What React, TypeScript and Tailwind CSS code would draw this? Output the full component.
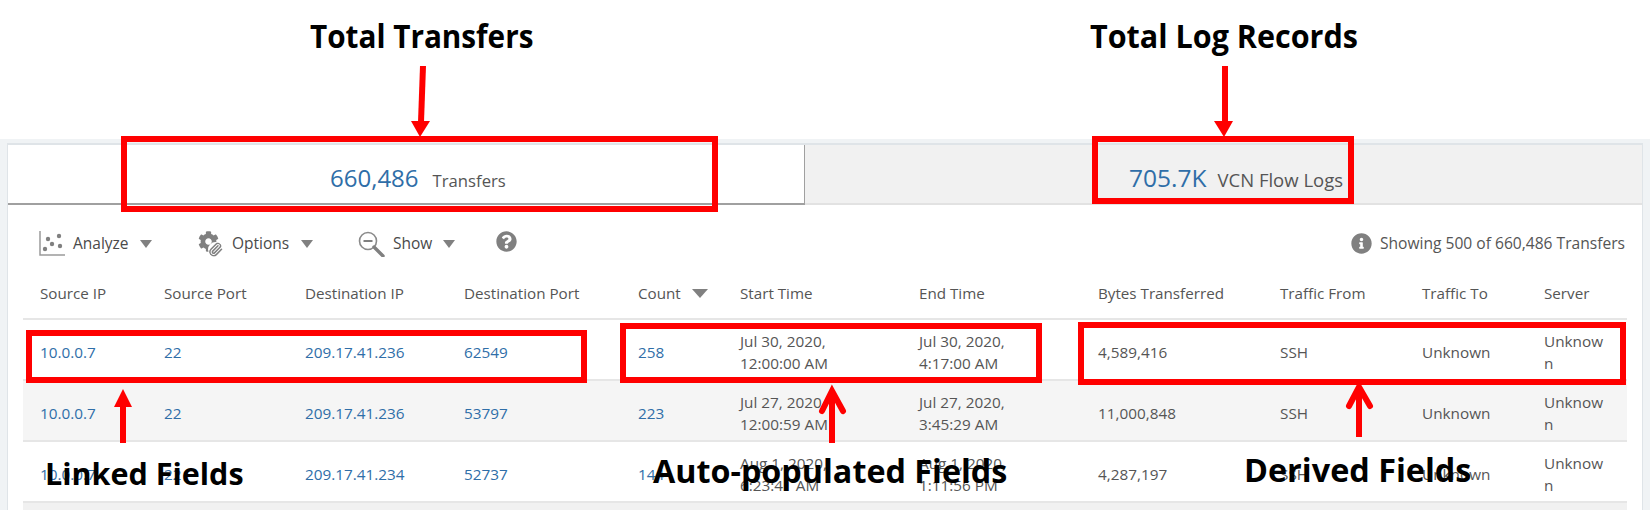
import { FaCog, FaInfoCircle, FaQuestionCircle } from 'react-icons/fa';
import { Paperclip } from 'lucide-react';

const columns = 'grid grid-cols-[124px_141px_159px_174px_102px_179px_179px_182px_142px_122px_84px]';

const headers = [
  'Source IP',
  'Source Port',
  'Destination IP',
  'Destination Port',
  'Count',
  'Start Time',
  'End Time',
  'Bytes Transferred',
  'Traffic From',
  'Traffic To',
  'Server',
];

const rows = [
  {
    ip: '10.0.0.7',
    port: '22',
    dest: '209.17.41.236',
    destPort: '62549',
    count: '258',
    start: ['Jul 30, 2020,', '12:00:00 AM'],
    end: ['Jul 30, 2020,', '4:17:00 AM'],
    bytes: '4,589,416',
    bg: 'bg-white',
  },
  {
    ip: '10.0.0.7',
    port: '22',
    dest: '209.17.41.236',
    destPort: '53797',
    count: '223',
    start: ['Jul 27, 2020,', '12:00:59 AM'],
    end: ['Jul 27, 2020,', '3:45:29 AM'],
    bytes: '11,000,848',
    bg: 'bg-[#f5f5f5]',
  },
  {
    ip: '10.0.0.7',
    port: '22',
    dest: '209.17.41.234',
    destPort: '52737',
    count: '144',
    start: ['Aug 1, 2020,', '6:23:41 AM'],
    end: ['Aug 1, 2020,', '1:11:56 PM'],
    bytes: '4,287,197',
    bg: 'bg-white',
  },
];

function Caret({ w = 12, h = 8 }: { w?: number; h?: number }) {
  return (
    <svg width={w} height={h} viewBox="0 0 12 8" preserveAspectRatio="none" className="shrink-0">
      <path d="M0 0h12L6 8z" fill="#808080" />
    </svg>
  );
}

function AnalyzeIcon() {
  return (
    <svg width="26" height="25" viewBox="0 0 26 25" className="shrink-0">
      <path d="M1 0v24h25" fill="none" stroke="#9a9a9a" strokeWidth="1.5" />
      <circle cx="9" cy="8" r="2.2" fill="#808080" />
      <circle cx="20" cy="5" r="2.2" fill="#808080" />
      <circle cx="13" cy="13" r="2.2" fill="#808080" />
      <circle cx="21" cy="15" r="2.2" fill="#808080" />
      <circle cx="6" cy="18" r="2.2" fill="#808080" />
    </svg>
  );
}

function OptionsIcon() {
  return (
    <span className="relative block w-[25px] h-[26px] shrink-0">
      <FaCog className="text-[#808080] w-[21px] h-[21px]" />
      <Paperclip
        className="absolute right-0 bottom-0 w-[15px] h-[15px] text-[#808080] bg-white rounded-full"
        strokeWidth={2.4}
      />
    </span>
  );
}

function ShowIcon() {
  return (
    <svg width="27" height="26" viewBox="0 0 27 26" className="shrink-0">
      <circle cx="10" cy="10" r="8.5" fill="none" stroke="#8a8a8a" strokeWidth="1.6" />
      <path d="M5.5 10h9" stroke="#808080" strokeWidth="2" />
      <path d="M16 16l9 9" stroke="#808080" strokeWidth="3.4" strokeLinecap="round" />
    </svg>
  );
}

function ToolButton({ icon, label, gap, width }: { icon: React.ReactNode; label: string; gap: string; width: string }) {
  return (
    <div className={`flex items-center ${width}`}>
      {icon}
      <span className={`${gap} text-[15.5px] text-[#4a4a4a]`}>{label}</span>
    </div>
  );
}

function Cell({ children, className = '' }: { children: React.ReactNode; className?: string }) {
  return <div className={`flex items-center pt-[5px] text-[15.3px] leading-[22px] ${className}`}>{children}</div>;
}

function Row({ row }: { row: (typeof rows)[number] }) {
  const link = 'text-[#2f6ea8]';
  const plain = 'text-[#555555]';
  return (
    <div className={`${columns} ${row.bg} h-[61px] pl-[17px] border-b-2 border-[#e6e6e6]`}>
      <Cell className={link}>{row.ip}</Cell>
      <Cell className={link}>{row.port}</Cell>
      <Cell className={link}>{row.dest}</Cell>
      <Cell className={link}>{row.destPort}</Cell>
      <Cell className={link}>{row.count}</Cell>
      <Cell className={plain}>
        <span>
          {row.start[0]}
          <br />
          {row.start[1]}
        </span>
      </Cell>
      <Cell className={plain}>
        <span>
          {row.end[0]}
          <br />
          {row.end[1]}
        </span>
      </Cell>
      <Cell className={plain}>{row.bytes}</Cell>
      <Cell className={plain}>SSH</Cell>
      <Cell className={plain}>Unknown</Cell>
      <Cell className={plain}>
        <span className="block w-[66px] break-all">Unknown</span>
      </Cell>
    </div>
  );
}

function Annotations() {
  const label = 'absolute font-bold text-black leading-none whitespace-nowrap';
  const box = 'absolute border-[6px] border-[#ff0000]';
  return (
    <>
      <div className={`${box} left-[121px] top-[136px] w-[597px] h-[76px]`} />
      <div className={`${box} left-[1092px] top-[136px] w-[262px] h-[68px]`} />
      <div className={`${box} left-[26px] top-[330px] w-[561px] h-[53px]`} />
      <div className={`${box} left-[620px] top-[323px] w-[422px] h-[60px]`} />
      <div className={`${box} left-[1078px] top-[322px] w-[548px] h-[63px]`} />

      <svg className="absolute left-0 top-0 pointer-events-none" width="1650" height="520" viewBox="0 0 1650 520">
        <path d="M423 66l-2 56" stroke="#ff0000" strokeWidth="6" />
        <path d="M411 121h19l-10 16z" fill="#ff0000" />
        <path d="M1225 66v56" stroke="#ff0000" strokeWidth="6" />
        <path d="M1214 121h19l-9 16z" fill="#ff0000" />
        <path d="M123 443v-40" stroke="#ff0000" strokeWidth="6" />
        <path d="M114 407h18l-9 -18z" fill="#ff0000" />
        <path d="M832 443v-52" stroke="#ff0000" strokeWidth="6" />
        <path d="M822 411l10-20 11 20" fill="none" stroke="#ff0000" strokeWidth="6" strokeLinecap="round" />
        <path d="M1359 437v-50" stroke="#ff0000" strokeWidth="6" />
        <path d="M1349 406l10-19 11 19" fill="none" stroke="#ff0000" strokeWidth="6" strokeLinecap="round" />
      </svg>

      <div className={`${label} left-[310px] top-[19px] text-[33px] origin-left scale-x-[0.9]`}>Total Transfers</div>
      <div className={`${label} left-[1090px] top-[19px] text-[33px] origin-left scale-x-[0.925]`}>Total Log Records</div>
      <div className={`${label} left-[45px] top-[458px] text-[30.5px]`}>Linked Fields</div>
      <div className={`${label} left-[653px] top-[454px] text-[32.3px]`}>Auto-populated Fields</div>
      <div className={`${label} left-[1244px] top-[453px] text-[32.4px]`}>Derived Fields</div>
    </>
  );
}

export default function App() {
  return (
    <div className="relative w-[1650px] h-[520px] bg-white overflow-hidden font-['Open_Sans',sans-serif]">
      <div className="h-[139px]" />
      <div className="h-[371px] bg-[#f0f3f5] pt-[4px] pl-[7px] pr-[7px]">
        <div className="h-[367px] bg-white border-l border-t-2 border-r border-[#dfe4e8]">
          <div className="flex h-[60px]">
            <div className="w-[797px] h-[60px] flex items-baseline pl-[322px] pt-[15px] border-r border-b-2 border-[#a0a0a0]">
              <span className="text-[24px] text-[#2f6ea8]">660,486</span>
              <span className="ml-[14px] text-[16.7px] text-[#555555]">Transfers</span>
            </div>
            <div className="flex-1 h-[60px] flex items-baseline pl-[324px] pt-[15px] bg-[#f1f1f1] border-b-2 border-[#e2e2e2]">
              <span className="text-[24.5px] text-[#2f6ea8]">705.7K</span>
              <span className="ml-[11px] text-[18.5px] text-[#555555]">VCN Flow Logs</span>
            </div>
          </div>

          <div className="flex items-center h-[60px] pt-[17px] pl-[31px] pr-[17px]">
            <ToolButton icon={<AnalyzeIcon />} label="Analyze" gap="ml-2" width="w-[101px]" />
            <Caret />
            <div className="w-[46px]" />
            <ToolButton icon={<OptionsIcon />} label="Options" gap="ml-[9px]" width="w-[103px]" />
            <Caret />
            <div className="w-[45px]" />
            <ToolButton icon={<ShowIcon />} label="Show" gap="ml-2" width="w-[85px]" />
            <Caret />
            <FaQuestionCircle className="ml-[41px] w-[21px] h-[21px] -mt-[4px] text-[#808080]" />
            <div className="ml-auto flex items-center gap-2">
              <FaInfoCircle className="w-[21px] h-[21px] text-[#808080]" />
              <span className="text-[15.6px] text-[#555555]">Showing 500 of 660,486 Transfers</span>
            </div>
          </div>

          <div className="mx-[15px]">
            <div className={`${columns} h-[55px] pt-[4px] pl-[17px] border-b-2 border-[#e6e6e6]`}>
              {headers.map((h) => (
                <div key={h} className="flex items-center gap-[11px] text-[15.2px] text-[#555555]">
                  {h}
                  {h === 'Count' && <Caret w={16} h={9} />}
                </div>
              ))}
            </div>
            {rows.map((r) => (
              <Row key={r.destPort} row={r} />
            ))}
            <div className="h-[7px] bg-[#f1f1f1]" />
          </div>
        </div>
      </div>
      <Annotations />
    </div>
  );
}
